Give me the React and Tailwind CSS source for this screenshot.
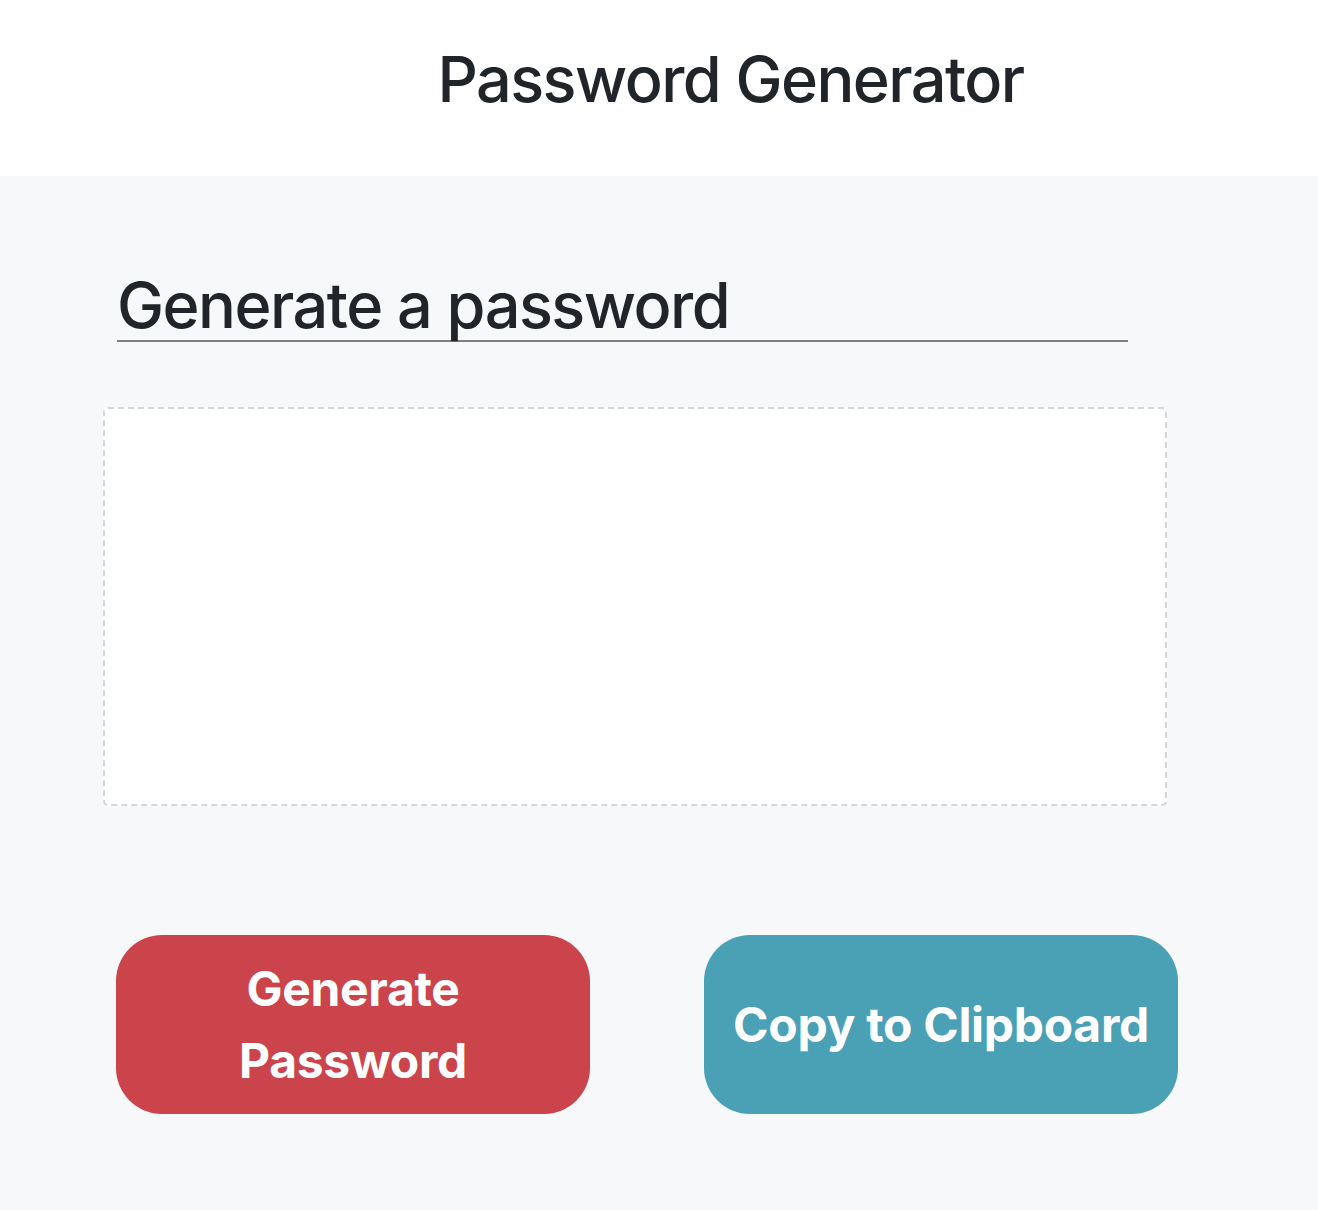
import React from 'react';

const App = () => {
  return (
    <div className="min-h-[1210px] bg-[#f7f8fa] text-[#212529]" style={{ fontFamily: 'Inter, "Noto Sans", sans-serif' }}>
      <header className="h-[176px] bg-white flex justify-center pl-[143px]">
        <h1 className="mt-[39px] text-[63px] leading-[80px] font-medium tracking-[-1.55px]">Password Generator</h1>
      </header>

      <main className="pl-[103px] pt-[96px]">
        <div className="ml-[14px] w-[1011px] border-b-2 border-[#7f7f7f]">
          <h2 className="text-[63px] leading-[66px] font-medium pb-[2px] tracking-[-1.5px]">Generate a password</h2>
        </div>

        <div className="mt-[65px] w-[1064px] h-[399px] bg-white border-2 border-dashed border-[#d3d6db] rounded-[5px]">
          <textarea
            readOnly
            className="w-full h-full resize-none bg-transparent outline-none"
            aria-label="Generated Password"
          />
        </div>

        <div className="mt-[129px] ml-[13px] flex gap-[114px]">
          <button className="w-[474px] h-[179px] rounded-[46px] bg-[#cb444b] text-white text-[48px] leading-[72px] font-bold px-8 tracking-[-0.3px]">
            Generate Password
          </button>
          <button className="w-[474px] h-[179px] rounded-[46px] bg-[#4aa0b5] text-white text-[48px] leading-[72px] font-bold tracking-[-0.3px]">
            Copy to Clipboard
          </button>
        </div>
      </main>
    </div>
  );
};

export default App;
